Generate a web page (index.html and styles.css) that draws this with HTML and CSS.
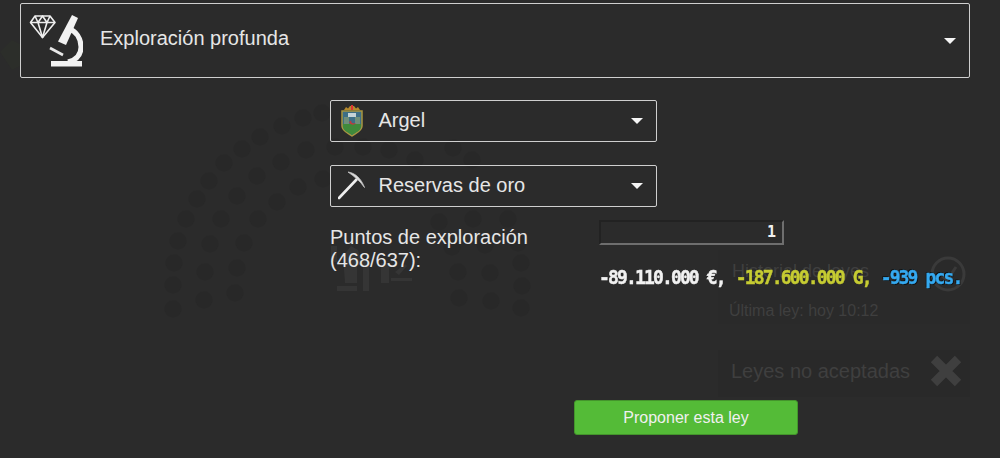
FILE: index.html
```html
<!DOCTYPE html>
<html lang="es">
<head>
    <meta charset="UTF-8">
    <meta name="viewport" content="width=device-width, initial-scale=1.0">
    <title>Exploración profunda</title>
    <link rel="stylesheet" href="styles.css">
</head>
<body>
    <!-- faded stuff behind the form -->
    <div class="ghost">
        <svg class="ghost-art" width="1000" height="458" viewBox="0 0 1000 458">
            <g class="ghost-dots" fill="#282828">
                <circle cx="282" cy="126" r="8.5"/><circle cx="260" cy="137" r="8.5"/><circle cx="242" cy="149" r="8.5"/>
                <circle cx="224" cy="163" r="8.5"/><circle cx="209" cy="181" r="8.5"/><circle cx="197" cy="199" r="8.5"/>
                <circle cx="186" cy="219" r="8.5"/><circle cx="178" cy="241" r="8.5"/><circle cx="174" cy="263" r="8.5"/>
                <circle cx="173" cy="285" r="8.5"/><circle cx="173" cy="309" r="8.5"/>
                <circle cx="303" cy="118" r="8.5"/><circle cx="322" cy="113" r="8.5"/><circle cx="306" cy="150" r="8.5"/>
                <circle cx="281" cy="162" r="8.5"/><circle cx="257" cy="176" r="8.5"/><circle cx="237" cy="196" r="8.5"/>
                <circle cx="221" cy="219" r="8.5"/><circle cx="210" cy="244" r="8.5"/><circle cx="205" cy="272" r="8.5"/>
                <circle cx="204" cy="300" r="8.5"/>
                <circle cx="335" cy="147" r="8.5"/><circle cx="363" cy="147" r="8.5"/><circle cx="389" cy="150" r="8.5"/>
                <circle cx="298" cy="187" r="8.5"/><circle cx="323" cy="179" r="8.5"/><circle cx="277" cy="202" r="8.5"/>
                <circle cx="258" cy="219" r="8.5"/><circle cx="244" cy="243" r="8.5"/><circle cx="237" cy="268" r="8.5"/>
                <circle cx="235" cy="293" r="8.5"/>
                <circle cx="415" cy="160" r="8.5"/><circle cx="453" cy="148" r="8.5"/><circle cx="472" cy="160" r="8.5"/>
                <circle cx="439" cy="222" r="8.5"/><circle cx="473" cy="219" r="8.5"/><circle cx="508" cy="219" r="8.5"/>
                <circle cx="452" cy="247" r="8.5"/><circle cx="485" cy="245" r="8.5"/><circle cx="518" cy="243" r="8.5"/>
                <circle cx="458" cy="272" r="8.5"/><circle cx="490" cy="273" r="8.5"/><circle cx="521" cy="263" r="8.5"/>
                <circle cx="522" cy="286" r="8.5"/><circle cx="459" cy="298" r="8.5"/><circle cx="491" cy="301" r="8.5"/>
                <circle cx="521" cy="308" r="8.5"/>
            </g>
            <g fill="#353535">
                <path d="M331 246h6v16h-6zM343 256l8-10 7 4 2 8 9 3v30h-6v-26h-6v26h-20v-5h20v-3h-12z"/>
                <path d="M381 263h8v20h-8zM391 278h21v3h-21zM395 272l10-8 2 2-8 9z"/>
            </g>
            <path d="M0 52 12 40l8 4v22l-8 4z" fill="#2c2e2a"/>
        </svg>
        <div class="ghost-panel ghost-history">
            <span>Historial de leyes</span>
            <svg class="ghost-icon" width="38" height="38" viewBox="0 0 38 38">
                <circle cx="19" cy="19" r="16" fill="none" stroke="#3a3a3a" stroke-width="3"/>
                <path d="M12 20l6 5 9-13" fill="none" stroke="#3a3a3a" stroke-width="3"/>
            </svg>
        </div>
        <div class="ghost-panel ghost-last">Última ley: hoy 10:12</div>
        <div class="ghost-panel ghost-rejected">
            <span>Leyes no aceptadas</span>
            <svg class="ghost-icon" width="32" height="32" viewBox="0 0 32 32">
                <path d="M4 4l24 24M28 4L4 28" stroke="#3f3f3f" stroke-width="9"/>
            </svg>
        </div>
    </div>

    <div class="form">
        <div class="select select-big">
            <svg class="select-icon" width="54" height="54" viewBox="0 0 54 54">
                <g fill="none" stroke="#eee" stroke-width="1.6" stroke-linejoin="round">
                    <path d="M6 2h15l5 6.500-12.500 15L1.500 8.500z"/>
                    <path d="M1.500 8.500h24.500M9 8.500l4.500 15 4.500-15M6 2l3 6.500 4.500-6.500 4.500 6.500L21 2"/>
                </g>
                <path d="M43 1l6 3-12 27-8-3.500z" fill="#f2f2f2"/>
                <path d="M40 15c7 2 12 9 12 18 0 8-5 13-13 15" fill="none" stroke="#f2f2f2" stroke-width="5"/>
                <path d="M21 34l13 7" stroke="#e8e8e8" stroke-width="2.600"/>
                <rect x="22" y="47" width="31" height="5.500" fill="#f2f2f2"/>
            </svg>
            <span class="select-text">Exploración profunda</span>
        </div>

        <div class="select select-small select-first">
            <svg class="select-icon" width="24" height="32" viewBox="1 0 24 32">
                <path d="M4 5l2-3 2 1.500L10 1h4l2 2.500L18 2l2 3z" fill="#b58a2e"/>
                <rect x="11" y="0" width="2" height="5" fill="#d33"/>
                <path d="M2 6h20v15c0 5-6 7-10 10C8 28 2 26 2 21z" fill="#3d6f86" stroke="#a9963f" stroke-width="1.500"/>
                <path d="M3 19h18v2c0 5-5.500 6.500-9 9-3.500-2.500-9-4-9-9z" fill="#3f8a3a"/>
                <path d="M8 8h8v4H8z" fill="#c4d3d6"/>
                <path d="M4 12h5v7H4zM15 12h5v7h-5z" fill="#6f8f7a"/>
                <path d="M9 17a4 4 0 0 0 7 1l-3 .5a3 3 0 0 1-2-3z" fill="#c43a3a"/>
            </svg>
            <span class="select-text">Argel</span>
        </div>

        <div class="select select-small">
            <svg class="select-icon" width="30" height="30" viewBox="2 1 30 30">
                <path d="M3 28 21 9" stroke="#eee" stroke-width="2.600" stroke-linecap="round"/>
                <path d="M12 2c7 1 13 6 16.500 15.500C24 11 19 7 12 2z" fill="#ddd" stroke="#c4c4c4" stroke-width=".8"/>
            </svg>
            <span class="select-text">Reservas de oro</span>
        </div>

        <div class="points">
            <div class="points-label">Puntos de exploración (468/637):</div>
            <div class="points-right">
                <div class="num-input">1</div>
                <div class="costs">
                    <span class="cost cost-money">-89.110.000 €,</span>
                    <span class="cost cost-gold">-187.600.000 G,</span>
                    <span class="cost cost-pcs">-939 pcs.</span>
                </div>
            </div>
        </div>

        <div class="actions">
            <button class="btn-green" type="button">Proponer esta ley</button>
        </div>
    </div>
</body>
</html>
```

FILE: styles.css
```css
html, body {
    margin: 0;
    height: 100%;
}

body {
    position: relative;
    overflow: hidden;
    background-color: #2b2b2b;
    color: #e6e6e6;
    font-family: "Liberation Sans", Arial, sans-serif;
    font-size: 20px;
}

/* faded layer */
.ghost {
    position: absolute;
    inset: 0;
}

.ghost-art {
    position: absolute;
    left: 0;
    top: 0;
}

.ghost-dots {
    filter: blur(.6px);
}

.ghost-panel {
    position: absolute;
    left: 718px;
    width: 252px;
    box-sizing: border-box;
    display: flex;
    align-items: center;
    justify-content: space-between;
    background-color: #2a2a2a;
    color: #3f3f3f;
}

.ghost-history {
    top: 250px;
    height: 48px;
    padding: 0 3px 0 14px;
    font-size: 18px;
}

.ghost-history span {
    margin-top: -6px;
}

.ghost-last {
    top: 298px;
    height: 26px;
    padding-left: 11px;
    font-size: 16px;
}

.ghost-rejected {
    top: 350px;
    height: 47px;
    padding: 0 8px 5px 13px;
    background-color: #292929;
}

/* form */
.form {
    position: relative;
    padding-top: 3px;
}

.select {
    position: relative;
    display: flex;
    align-items: center;
    box-sizing: border-box;
    border: 1px solid #cfcfcf;
    border-radius: 2px;
}

.select::after {
    content: "";
    position: absolute;
    top: 50%;
    margin-top: -3px;
    border-left: 6px solid transparent;
    border-right: 6px solid transparent;
    border-top: 6px solid #f5f5f5;
}

.select-big {
    height: 75px;
    margin: 0 30px 0 20px;
    padding-left: 8px;
}

.select-big::after {
    right: 13px;
}

.select-big .select-text {
    margin-left: 17px;
    margin-top: -5px;
}

.select-small {
    width: 327px;
    height: 42px;
    margin: 23px 0 0 330px;
    padding-left: 7px;
}

.select-first {
    margin-top: 22px;
}

.select-small::after {
    right: 13px;
}

.select-small .select-icon {
    width: 30px;
}

.select-small .select-text {
    margin-left: 10.5px;
    margin-top: -1px;
}

.points {
    display: flex;
    margin: 13px 0 0 330px;
}

.points-label {
    width: 269px;
    padding-top: 6px;
    line-height: 23px;
}

.num-input {
    box-sizing: border-box;
    width: 185px;
    height: 25px;
    padding-right: 6px;
    border: 2px solid;
    border-color: #222 #6e6e6e #6e6e6e #222;
    text-align: right;
    line-height: 21px;
    font-family: "DejaVu Sans Mono", monospace;
    font-size: 15px;
    font-weight: bold;
    color: #f0f0f0;
}

/* game font is not available, stretched mono is the nearest */
.costs {
    display: flex;
    width: 380px;
    margin-top: 21px;
    font-family: "DejaVu Sans Mono", monospace;
    font-size: 18px;
    font-weight: bold;
    line-height: 22px;
    letter-spacing: -1.85px;
    white-space: nowrap;
    transform: scaleY(1.12);
    -webkit-text-stroke: .4px currentColor;
}

.cost-money {
    color: #f1f1f1;
}

.cost-gold {
    margin-left: 11px;
    color: #c6cc32;
}

.cost-pcs {
    margin-left: 10px;
    color: #35a9f0;
    text-shadow: 1px 1px 0 #111, -1px -1px 0 #111;
}

.actions {
    margin: 112px 0 0 574px;
}

.btn-green {
    display: block;
    box-sizing: border-box;
    width: 224px;
    height: 35px;
    border: 1px solid #44952c;
    border-radius: 3px;
    background-color: #54bb37;
    color: #f0f0f0;
    font-family: inherit;
    font-size: 16px;
}
```
